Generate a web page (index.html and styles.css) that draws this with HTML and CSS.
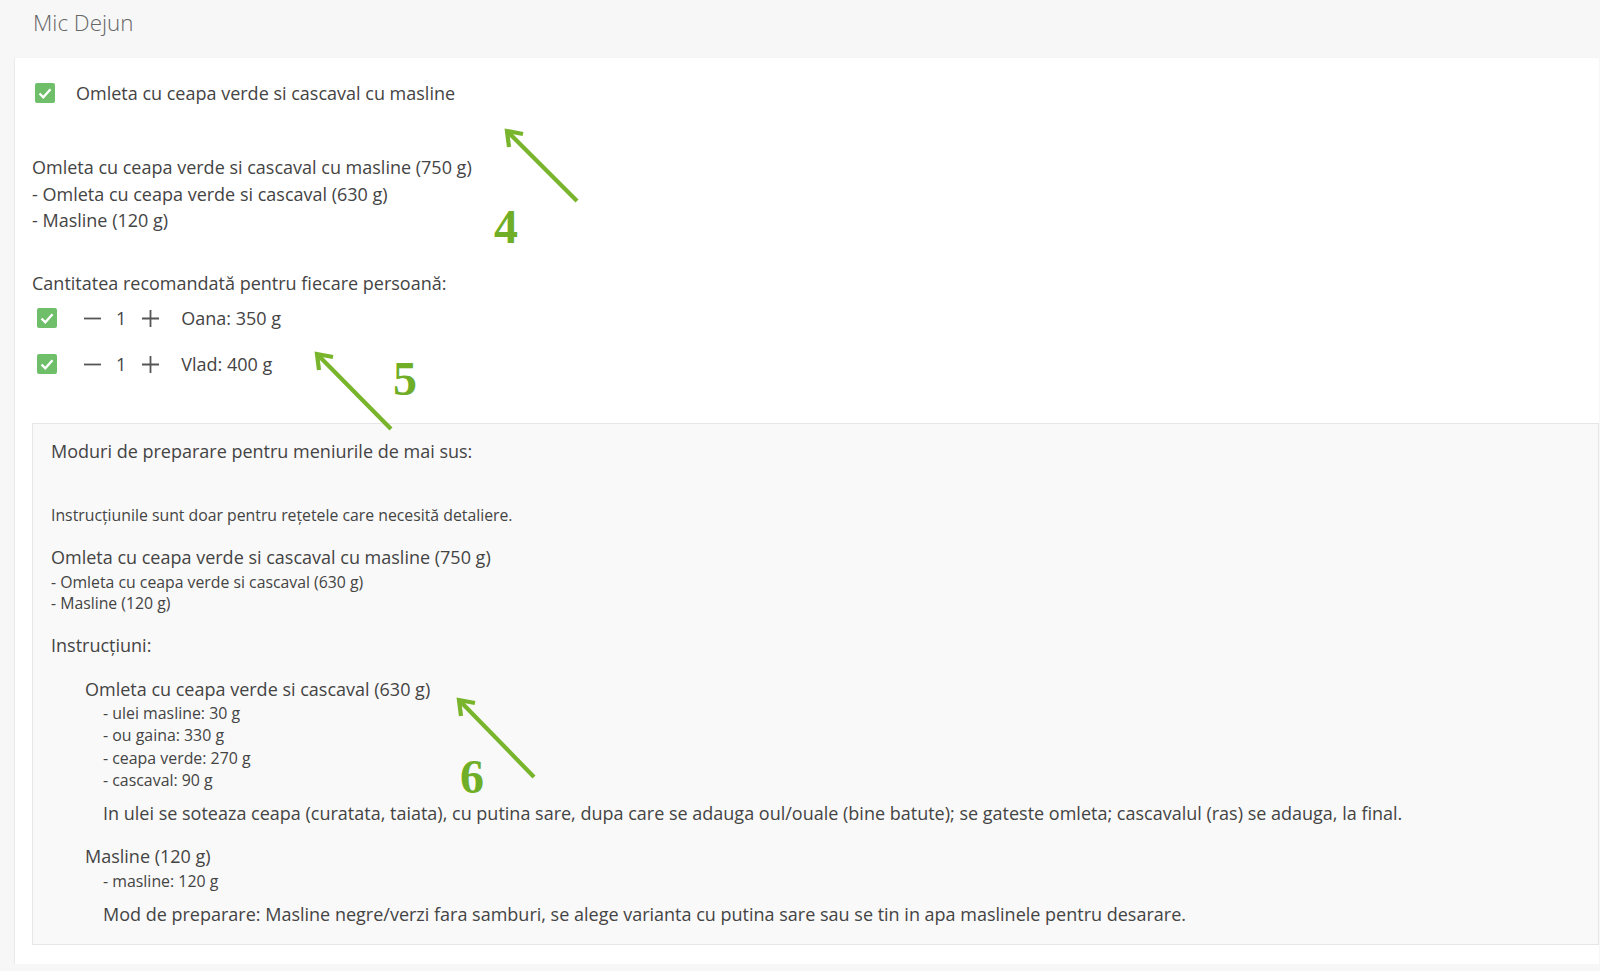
FILE: index.html
```html
<!DOCTYPE html>
<html lang="ro">
<head>
    <meta charset="UTF-8">
    <meta name="viewport" content="width=device-width, initial-scale=1.0">
    <title>Mic Dejun</title>
    <link rel="stylesheet" href="styles.css">
</head>
<body>
    <div class="meal">
        <div class="meal-header">Mic Dejun</div>
        <div class="meal-card">
            <div class="dish-row">
                <span class="check">
                    <svg viewBox="0 0 20 20" width="20" height="20"><path d="M4.5 10.5 L8.3 14.3 L15.5 6.2"/></svg>
                </span>
                <span class="dish-name">Omleta cu ceapa verde si cascaval cu masline</span>
            </div>

            <div class="dish-parts">
                <p>Omleta cu ceapa verde si cascaval cu masline (750 g)</p>
                <p>- Omleta cu ceapa verde si cascaval (630 g)</p>
                <p>- Masline (120 g)</p>
            </div>

            <p class="portions-title">Cantitatea recomandată pentru fiecare persoană:</p>
            <div class="portion">
                <span class="check">
                    <svg viewBox="0 0 20 20" width="20" height="20"><path d="M4.5 10.5 L8.3 14.3 L15.5 6.2"/></svg>
                </span>
                <span class="qty-btn minus">
                    <svg viewBox="0 0 17 17" width="17" height="17"><path d="M0 8.5 H17"/></svg>
                </span>
                <span class="qty">1</span>
                <span class="qty-btn plus">
                    <svg viewBox="0 0 17 17" width="17" height="17"><path d="M0 8.5 H17 M8.5 0 V17"/></svg>
                </span>
                <span class="person">Oana: 350 g</span>
            </div>
            <div class="portion">
                <span class="check">
                    <svg viewBox="0 0 20 20" width="20" height="20"><path d="M4.5 10.5 L8.3 14.3 L15.5 6.2"/></svg>
                </span>
                <span class="qty-btn minus">
                    <svg viewBox="0 0 17 17" width="17" height="17"><path d="M0 8.5 H17"/></svg>
                </span>
                <span class="qty">1</span>
                <span class="qty-btn plus">
                    <svg viewBox="0 0 17 17" width="17" height="17"><path d="M0 8.5 H17 M8.5 0 V17"/></svg>
                </span>
                <span class="person">Vlad: 400 g</span>
            </div>

            <div class="prep">
                <p class="prep-title">Moduri de preparare pentru meniurile de mai sus:</p>
                <p class="prep-note">Instrucțiunile sunt doar pentru rețetele care necesită detaliere.</p>

                <p class="recipe-title">Omleta cu ceapa verde si cascaval cu masline (750 g)</p>
                <div class="recipe-parts">
                    <p>- Omleta cu ceapa verde si cascaval (630 g)</p>
                    <p>- Masline (120 g)</p>
                </div>

                <p class="instr-title">Instrucțiuni:</p>

                <div class="step">
                    <p class="step-title">Omleta cu ceapa verde si cascaval (630 g)</p>
                    <ul class="ingredients">
                        <li>- ulei masline: 30 g</li>
                        <li>- ou gaina: 330 g</li>
                        <li>- ceapa verde: 270 g</li>
                        <li>- cascaval: 90 g</li>
                    </ul>
                    <p class="step-text">In ulei se soteaza ceapa (curatata, taiata), cu putina sare, dupa care se adauga oul/ouale (bine batute); se gateste omleta; cascavalul (ras) se adauga, la final.</p>
                </div>

                <div class="step">
                    <p class="step-title">Masline (120 g)</p>
                    <ul class="ingredients">
                        <li>- masline: 120 g</li>
                    </ul>
                    <p class="step-text">Mod de preparare: Masline negre/verzi fara samburi, se alege varianta cu putina sare sau se tin in apa maslinele pentru desarare.</p>
                </div>
            </div>
        </div>
    </div>

    <!-- adnotari peste pagina -->
    <svg class="notes" width="1600" height="971" viewBox="0 0 1600 971">
        <g class="arrow">
            <path d="M577 201 L507 131"/>
            <path d="M523 134 L507 131 L509 147"/>
        </g>
        <g class="arrow">
            <path d="M391 429 L317 354"/>
            <path d="M333 357 L317 354 L319 370"/>
        </g>
        <g class="arrow">
            <path d="M534 777 L459 700"/>
            <path d="M475 703 L459 700 L461 716"/>
        </g>
        <text x="494" y="243">4</text>
        <text x="393" y="395">5</text>
        <text x="460" y="793">6</text>
    </svg>
</body>
</html>
```

FILE: styles.css
```css
body {
    margin: 0;
    background: #f7f7f8;
    font-family: "Open Sans", "Liberation Sans", sans-serif;
    color: #444;
    position: relative;
}

p {
    margin: 0;
}

.meal-header {
    height: 58px;
    box-sizing: border-box;
    padding: 8px 33px 0;
    font-size: 22.4px;
    font-weight: 300;
    line-height: 30px;
    color: #666;
}

.meal-card {
    margin: 0 1px 0 15px;
    padding: 22px 0 19px 17px;
    background: #fff;
    box-shadow: -1px 0 1px rgba(0, 0, 0, 0.05), 0 2px 0 #cfcfcf;
    font-size: 18px;
    line-height: 26.5px;
}

.check {
    display: inline-flex;
    width: 20px;
    height: 20px;
    border-radius: 2px;
    background: #6fbe69;
}

.check svg {
    fill: none;
    stroke: #fff;
    stroke-width: 2.4;
}

.dish-row {
    display: flex;
    align-items: center;
    height: 26px;
    padding-left: 3px;
}

.dish-name {
    margin-left: 21px;
}

.dish-parts {
    margin-top: 48px;
}

.portions-title {
    margin-top: 36px;
}

.portion {
    display: flex;
    align-items: center;
    height: 30px;
    margin-top: 7px;
    padding-left: 5px;
}

.portion + .portion {
    margin-top: 16px;
}

.qty-btn {
    display: inline-flex;
}

.qty-btn svg {
    stroke: #555;
    stroke-width: 1.8;
}

.minus {
    margin-left: 27px;
}

.qty {
    margin: 0 16px 0 15px;
}

.person {
    margin-left: 22px;
}

.prep {
    margin-top: 44px;
    padding: 14px 18px 17px;
    background: #f9f9f9;
    border: 1px solid #e6e6e6;
    line-height: 26px;
}

.prep-note {
    margin-top: 40px;
    font-size: 15.8px;
    line-height: 22px;
}

.recipe-title {
    margin-top: 18px;
}

.recipe-parts {
    margin-top: 2px;
    font-size: 15.8px;
    line-height: 21px;
}

.instr-title {
    margin-top: 18px;
}

.step {
    padding-left: 34px;
}

.step-title {
    margin-top: 17.5px;
}

.ingredients {
    list-style: none;
    margin: 0;
    padding: 0 0 0 18px;
    font-size: 15.9px;
    line-height: 22.6px;
}

.step + .step .ingredients {
    padding-top: 1px;
}

.step-text {
    margin-top: 8px;
    padding-left: 18px;
}

.notes {
    position: absolute;
    top: 0;
    left: 0;
    pointer-events: none;
}

.arrow path {
    fill: none;
    stroke: #78b52c;
    stroke-width: 4.2;
}

.notes text {
    font-family: "Liberation Serif", serif;
    font-weight: bold;
    font-size: 48px;
    fill: #6fae26;
}
```
